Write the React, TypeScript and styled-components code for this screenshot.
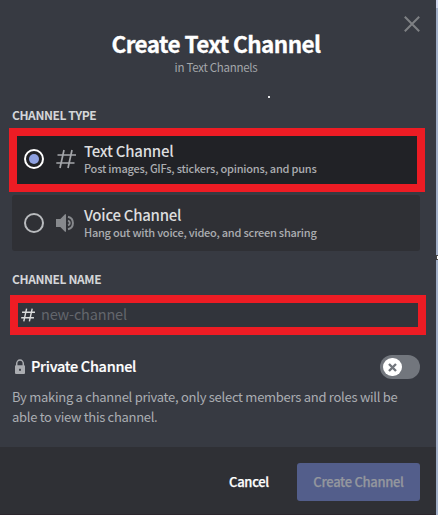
import React from "react";
import styled, { createGlobalStyle } from "styled-components";

const GlobalStyle = createGlobalStyle`
  * { box-sizing: border-box; }
  body {
    margin: 0;
    background: #a3b1ca;
    font-family: "Noto Sans CJK SC", "Noto Sans", sans-serif;
    overflow: hidden;
  }
  h1, h2, p { margin: 0; }
`;

const Page = styled.div`
  position: relative;
  width: 438px;
  height: 515px;
  background: linear-gradient(#d0d8ee 8px, #a3b1ca 8px);
`;

const Dialog = styled.div`
  display: flex;
  flex-direction: column;
  width: 436px;
  height: 515px;
  background: #373a42;
  border-bottom: 1px solid #2b262d;
`;

const Header = styled.header`
  position: relative;
  height: 106px;
  padding: 27px 4px 0 0;
  display: flex;
  flex-direction: column;
  align-items: center;
`;

const Title = styled.h1`
  font-size: 22.5px;
  line-height: 32px;
  font-weight: 700;
  color: #fff;
  white-space: nowrap;
  letter-spacing: -0.58px;
  -webkit-text-stroke: 0.3px #fff;
`;

const Subtitle = styled.p`
  font-size: 11.5px;
  line-height: 16px;
  color: #a3a6aa;
  letter-spacing: -0.28px;
`;

const CloseButton = styled.button`
  position: absolute;
  top: 15px;
  right: 15px;
  width: 18px;
  height: 18px;
  padding: 0;
  border: 0;
  background: none;
  svg { display: block; }
`;

const Speck = styled.span`
  position: absolute;
  left: 268px;
  top: 96px;
  width: 2px;
  height: 2px;
  background: #e4e5e7;
`;

const Body = styled.main`
  height: 341px;
`;

const Label = styled.h2<{ $spacing: number }>`
  padding-left: 12px;
  font-size: 12px;
  line-height: 17px;
  height: 16px;
  font-weight: 700;
  color: #d3d5d8;
  letter-spacing: ${(p) => p.$spacing}px;
`;

const Option = styled.div<{ $selected?: boolean }>`
  display: flex;
  align-items: center;
  width: ${(p) => (p.$selected ? 416 : 408)}px;
  height: ${(p) => (p.$selected ? 64 : 56)}px;
  margin: ${(p) => (p.$selected ? "6px 0 3px 9px" : "0 0 19px 12px")};
  padding: ${(p) => (p.$selected ? "0 0 2px 7px" : "0 0 0 12px")};
  border: ${(p) => (p.$selected ? "8px solid #ed1c24" : "0")};
  border-radius: ${(p) => (p.$selected ? 0 : 3)}px;
  background: ${(p) => (p.$selected ? "#212226" : "#2f3035")};
`;

const Radio = styled.span<{ $selected?: boolean }>`
  display: flex;
  align-items: center;
  justify-content: center;
  width: 20px;
  height: 20px;
  margin-right: 12px;
  border: 2px solid ${(p) => (p.$selected ? "#fff" : "#b9bbbe")};
  border-radius: 50%;
  &::after {
    content: "";
    width: 10px;
    height: 10px;
    border-radius: 50%;
    background: ${(p) => (p.$selected ? "#8ea1e1" : "transparent")};
  }
`;

const OptionIcon = styled.span`
  width: 20px;
  height: 20px;
  margin-right: 8px;
  svg { display: block; }
`;

const OptionText = styled.div`
  display: flex;
  flex-direction: column;
`;

const OptionTitle = styled.span<{ $spacing: number }>`
  font-size: 15px;
  line-height: 20px;
  font-weight: 500;
  color: #dcddde;
  letter-spacing: ${(p) => p.$spacing}px;
`;

const OptionHint = styled.span<{ $spacing: number }>`
  margin-bottom: 2px;
  font-size: 11px;
  line-height: 15px;
  font-weight: 500;
  color: #abadb1;
  white-space: nowrap;
  letter-spacing: ${(p) => p.$spacing}px;
`;

const NameField = styled.div`
  display: flex;
  align-items: center;
  width: 416px;
  height: 40px;
  margin: 9px 0 0 10px;
  padding-left: 3px;
  border: 8px solid #ed1c24;
  background: #31343b;
  svg { display: block; margin-right: 6px; }
`;

const Placeholder = styled.span`
  font-size: 14.5px;
  line-height: 20px;
  margin-top: -3px;
  color: #63666c;
  letter-spacing: -0.18px;
`;

const PrivateRow = styled.div`
  display: flex;
  align-items: center;
  height: 24px;
  margin: 20px 16px 8px 12px;
  svg { display: block; }
`;

const PrivateTitle = styled.span`
  flex: 1;
  margin: -2px 0 0 4px;
  font-size: 14.5px;
  line-height: 20px;
  font-weight: 500;
  color: #fff;
  letter-spacing: -0.29px;
  -webkit-text-stroke: 0.2px #fff;
`;

const Toggle = styled.span`
  display: flex;
  align-items: center;
  width: 40px;
  height: 24px;
  padding-left: 3px;
  border-radius: 12px;
  background: #72767d;
`;

const Knob = styled.span`
  display: flex;
  align-items: center;
  justify-content: center;
  width: 19px;
  height: 18px;
  border-radius: 9px;
  background: #fff;
`;

const Description = styled.p<{ $spacing: number }>`
  padding-left: 12px;
  font-size: 13px;
  line-height: 20px;
  color: #aaadb2;
  white-space: nowrap;
  letter-spacing: ${(p) => p.$spacing}px;
`;

const Footer = styled.footer`
  display: flex;
  align-items: flex-start;
  justify-content: flex-end;
  gap: 28px;
  flex: 1;
  padding: 16px 16px 0 0;
  background: #2f3035;
`;

const Action = styled.button<{ $primary?: boolean }>`
  width: ${(p) => (p.$primary ? "123px" : "40px")};
  height: 38px;
  padding: 0;
  border: 0;
  border-radius: 3px;
  background: ${(p) => (p.$primary ? "#535e8b" : "transparent")};
  color: ${(p) => (p.$primary ? "#94979e" : "#fff")};
  font-family: inherit;
  font-size: 13px;
  font-weight: 500;
  line-height: 16px;
  letter-spacing: -0.3px;
  white-space: nowrap;
  -webkit-text-stroke: 0.25px currentColor;
`;

const EdgeHandle = styled.span`
  position: absolute;
  right: -3px;
  top: 255px;
  width: 5px;
  height: 5px;
  border: 1px solid #444;
  background: #fff;
`;

const Hash = ({ size, color, stroke }: { size: number; color: string; stroke: number }) => (
  <svg width={size} height={size} viewBox="0 0 20 20" fill="none" stroke={color} strokeWidth={stroke}>
    <path d="M8 1L4 19M16 1L12 19M1.5 6H20M0.3 14H18.5" />
  </svg>
);

export default function App() {
  return (
    <>
      <GlobalStyle />
      <Page>
        <Dialog>
          <Header>
            <Title>Create Text Channel</Title>
            <Subtitle>in Text Channels</Subtitle>
            <CloseButton aria-label="Close">
              <svg width="18" height="18" viewBox="0 0 18 18" stroke="#7e8084" strokeWidth="2">
                <path d="M1.8 1.8L16.2 16.2M16.2 1.8L1.8 16.2" />
              </svg>
            </CloseButton>
            <Speck />
          </Header>
          <Body>
            <Label $spacing={-0.42}>CHANNEL TYPE</Label>
            <Option $selected>
              <Radio $selected />
              <OptionIcon><Hash size={20} color="#a4a6aa" stroke={1.7} /></OptionIcon>
              <OptionText>
                <OptionTitle $spacing={-0.25}>Text Channel</OptionTitle>
                <OptionHint $spacing={-0.22}>Post images, GIFs, stickers, opinions, and puns</OptionHint>
              </OptionText>
            </Option>
            <Option>
              <Radio />
              <OptionIcon>
                <svg width="20" height="20" viewBox="0 0 20 20">
                  <path d="M9 1.2H10V18.8H9L4.3 14H0V6H4.3Z" fill="#87898d" />
                  <path d="M12 3.7A6.5 6.5 0 0 1 12 16.3M12 7.6A2.5 2.5 0 0 1 12 12.4" fill="none" stroke="#87898d" strokeWidth="2" />
                </svg>
              </OptionIcon>
              <OptionText>
                <OptionTitle $spacing={-0.27}>Voice Channel</OptionTitle>
                <OptionHint $spacing={-0.24}>Hang out with voice, video, and screen sharing</OptionHint>
              </OptionText>
            </Option>
            <Label $spacing={-0.4}>CHANNEL NAME</Label>
            <NameField>
              <Hash size={14} color="#dcddde" stroke={2} />
              <Placeholder>new-channel</Placeholder>
            </NameField>
            <PrivateRow>
              <svg width="15" height="16" viewBox="0 0 15 16">
                <path d="M4.7 7V4.7A3.3 3.6 0 0 1 11.3 4.7V7" fill="none" stroke="#abadb1" strokeWidth="1.5" />
                <rect x="3" y="6.3" width="10" height="8.7" rx="1" fill="#abadb1" />
                <rect x="7.1" y="9.8" width="1.8" height="2" fill="#373a42" />
              </svg>
              <PrivateTitle>Private Channel</PrivateTitle>
              <Toggle>
                <Knob>
                  <svg width="9" height="9" viewBox="0 0 9 9" stroke="#72767d" strokeWidth="2.4">
                    <path d="M1 1L8 8M8 1L1 8" />
                  </svg>
                </Knob>
              </Toggle>
            </PrivateRow>
            <Description $spacing={-0.27}>By making a channel private, only select members and roles will be</Description>
            <Description $spacing={-0.3}>able to view this channel.</Description>
          </Body>
          <Footer>
            <Action>Cancel</Action>
            <Action $primary>Create Channel</Action>
          </Footer>
        </Dialog>
        <EdgeHandle />
      </Page>
    </>
  );
}
